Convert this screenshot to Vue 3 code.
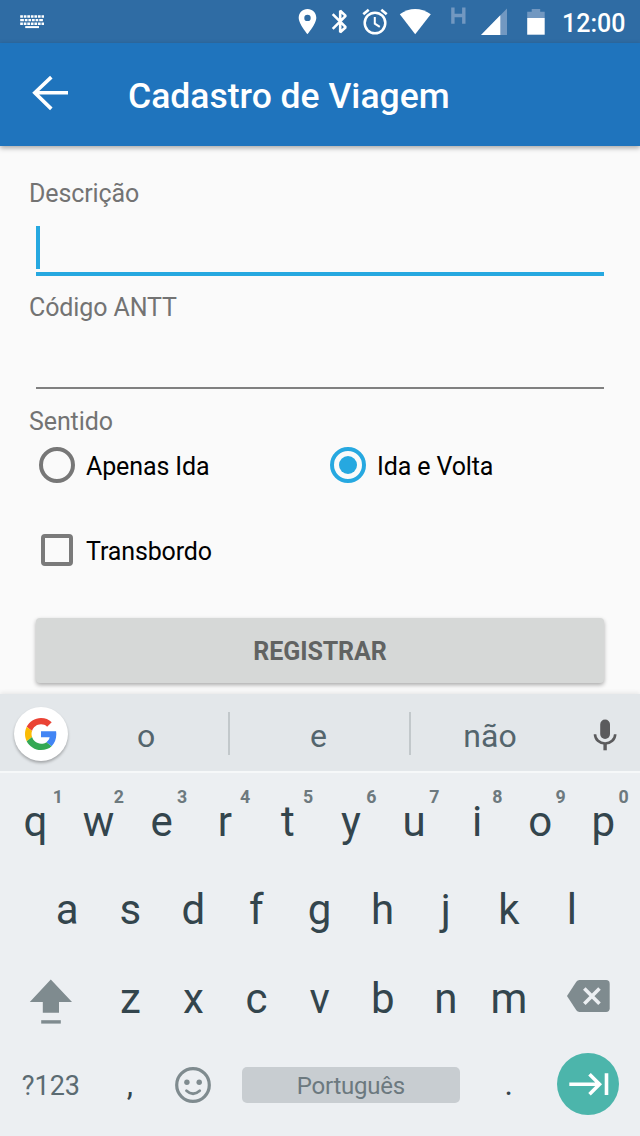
<script setup>
import { ref } from 'vue'

const direction = ref('volta')
const topRow = 'qwertyuiop'.split('').map((c, i) => ({ c, hint: (i + 1) % 10 }))
const middleRow = 'asdfghjkl'.split('')
const lowerRow = 'zxcvbnm'.split('')
const suggestions = ['o', 'e', 'não']
</script>

<template>
  <div class="screen">
    <header class="status">
      <svg class="kbd" width="26" height="17" viewBox="0 0 26 17" stroke="#fff">
        <path d="M1.200 3.400H25M1.200 10.700H25" stroke-width="2.500" stroke-dasharray="2.700 .85" />
        <path d="M1.200 7.100H25" stroke-width="2.300" stroke-dasharray="3.700 .9 2.700 .9 2.700 .9 2.700 .9 2.700 .9 3.700" />
        <path d="M6.200 14.100H20" stroke-width="2" />
      </svg>
      <svg class="tray" width="260" height="43" viewBox="290 0 260 43" fill="#fff">
        <path fill-rule="evenodd" d="M307.500 9c-5 0-8.800 3.900-8.800 8.800 0 6.300 8.800 16.400 8.800 16.400s8.800-10.100 8.800-16.400c0-4.900-3.800-8.800-8.800-8.800zm0 5.700a3.200 3.200 0 1 1 0 6.400 3.200 3.200 0 0 1 0-6.400z" />
        <path d="M332.700 14.200 345.700 27.200 340.200 32.300V10.700L345.700 15.900 332.700 28.900" fill="none" stroke="#fff" stroke-width="2.600" stroke-linejoin="bevel" />
        <g fill="none" stroke="#fff">
          <circle cx="375" cy="23" r="10.300" stroke-width="2.500" />
          <path d="M374.800 17v6.600l5 3.200" stroke-width="2" />
          <path d="M363.300 14.300l5.400-4.600M381.300 9.700l5.400 4.600" stroke-width="2.700" />
        </g>
        <path d="M399.800 14.300C404.500 10.800 410 9 415.200 9s10.800 1.800 15.600 5.300L415.200 34.200z" />
        <path d="M507 8.500V35H481z" fill="#7298c1" />
        <path d="M500.300 15.300V35H481z" />
        <path d="M527.200 18v-6.300h4.500V9h8.500v2.700h4.500V18z" fill="#7298c1" />
        <path d="M527.200 18h17.500v16.700h-17.500z" />
        <path d="M452.900 7.500v16.200M463.800 7.500v16.200M452.900 15.500h10.900" fill="none" stroke="#7298c1" stroke-width="3.400" />
      </svg>
      <span class="clock">12:00</span>
    </header>

    <div class="appbar">
      <svg width="40" height="40" viewBox="30 72 40 40" fill="none" stroke="#fff" stroke-width="3.600">
        <path d="M68 91.700H34.500M51.300 76.100 34.800 91.700 51.300 107.900" />
      </svg>
      <h1>Cadastro de Viagem</h1>
    </div>

    <main class="form">
      <label>Descrição</label>
      <div class="field active"><i class="caret"></i></div>
      <label>Código ANTT</label>
      <div class="field"></div>
      <label>Sentido</label>
      <div class="radios">
        <div class="option" @click="direction = 'ida'">
          <span class="radio" :class="{ on: direction === 'ida' }"></span>Apenas Ida
        </div>
        <div class="option" @click="direction = 'volta'">
          <span class="radio" :class="{ on: direction === 'volta' }"></span>Ida e Volta
        </div>
      </div>
      <div class="option check"><span class="box"></span>Transbordo</div>
      <button class="submit">REGISTRAR</button>
    </main>

    <section class="keyboard">
      <div class="suggest">
        <div class="google">
          <svg width="32" height="32" viewBox="0 0 48 48">
            <path fill="#ea4335" d="M24 9.500c3.540 0 6.710 1.220 9.210 3.600l6.850-6.850C35.900 2.380 30.470 0 24 0 14.620 0 6.510 5.380 2.560 13.220l7.980 6.190C12.430 13.720 17.740 9.500 24 9.500z" />
            <path fill="#4285f4" d="M46.980 24.550c0-1.570-.15-3.090-.38-4.550H24v9.020h12.940c-.58 2.960-2.260 5.480-4.780 7.180l7.730 6c4.510-4.180 7.090-10.360 7.090-17.650z" />
            <path fill="#fbbc05" d="M10.530 28.590c-.48-1.450-.76-2.990-.76-4.590s.27-3.140.76-4.590l-7.980-6.190C.92 16.460 0 20.120 0 24c0 3.880.92 7.540 2.560 10.780l7.970-6.190z" />
            <path fill="#34a853" d="M24 48c6.480 0 11.930-2.130 15.890-5.810l-7.730-6c-2.150 1.450-4.920 2.300-8.160 2.300-6.260 0-11.570-4.220-13.470-9.910l-7.980 6.190C6.510 42.620 14.620 48 24 48z" />
          </svg>
        </div>
        <div class="words">
          <span v-for="w in suggestions" :key="w">{{ w }}</span>
        </div>
        <svg class="mic" width="24" height="32" viewBox="0 0 24 32">
          <rect x="7.200" y="0.500" width="9.800" height="19.500" rx="4.900" fill="#5b5b5d" />
          <path d="M2 15.200a10.100 9.300 0 0 0 20.200 0" fill="none" stroke="#5b5b5d" stroke-width="2.600" />
          <path d="M12.100 24v7.300" stroke="#5b5b5d" stroke-width="3.400" />
        </svg>
      </div>

      <div class="keys">
        <div class="row">
          <span v-for="k in topRow" :key="k.c" class="key">{{ k.c }}<sup>{{ k.hint }}</sup></span>
        </div>
        <div class="row inset">
          <span v-for="k in middleRow" :key="k" class="key">{{ k }}</span>
        </div>
        <div class="row">
          <span class="wide">
            <svg class="shift" width="44" height="46" viewBox="29 979 44 46" fill="#7f8b8f">
              <path d="M50.800 979.500 72 1002H59v10.800H42.800V1002H29.800z" />
              <path d="M41.200 1020.200h19.600v3.400H41.200z" />
            </svg>
          </span>
          <span v-for="k in lowerRow" :key="k" class="key">{{ k }}</span>
          <span class="wide">
            <svg class="erase" width="44" height="34" viewBox="567 979 44 34">
              <path d="M579.500 980H606q3.700 0 3.700 3.700v24.500q0 3.700-3.700 3.700H579.500q-2 0-3.200-1.700L567 996l9.300-14.300q1.200-1.700 3.200-1.700z" fill="#7f8b8f" />
              <path d="M584.300 988.500l15.200 15.200M599.500 988.500l-15.200 15.200" stroke="#eceff2" stroke-width="3.600" />
            </svg>
          </span>
        </div>
        <div class="row bottom">
          <span class="wide symbols">?123</span>
          <span class="key mark">,</span>
          <span class="key smile">
            <svg width="38" height="38" viewBox="0 0 38 38" fill="none" stroke="#7f8b8f">
              <circle cx="19" cy="19" r="16.300" stroke-width="3.200" />
              <g fill="#7f8b8f" stroke="none"><circle cx="12.900" cy="16.300" r="2.700" /><circle cx="25.200" cy="16.300" r="2.700" /></g>
              <path d="M12.500 24.800q6.500 6 13.200 0" stroke-width="2.800" stroke-linecap="round" />
            </svg>
          </span>
          <span class="space"><b>Português</b></span>
          <span class="key mark">.</span>
          <span class="wide">
            <svg class="next" width="64" height="64" viewBox="0 0 64 64">
              <circle cx="32" cy="32" r="31" fill="#4cb5ab" />
              <path d="M13.300 32.200H44M33.500 22.200 43.500 32.200 33.500 42.200M50.500 21.200v21.700" fill="none" stroke="#fff" stroke-width="3.600" />
            </svg>
          </span>
        </div>
      </div>
    </section>
  </div>
</template>

<style>
body { margin: 0; }
</style>

<style scoped>
* { box-sizing: border-box; }
.screen {
  width: 640px; height: 1136px; overflow: hidden;
  display: flex; flex-direction: column;
  background: #fafafa; color: #000;
  font-family: Roboto, "Liberation Sans", sans-serif;
}
svg { display: block; flex: none; }
.status {
  height: 43px; flex: none; background: #2f6ca4;
  display: flex; align-items: center; color: #fff;
}
.kbd { margin-left: 19px; }
.tray { margin-left: auto; }
.clock { width: 90px; padding: 4px 0 0 12px; font-size: 25px; font-weight: 500; line-height: 30px; }
.appbar {
  height: 103px; flex: none; background: #1f74bd; color: #fff;
  display: flex; align-items: center; padding: 0 0 3px 30px;
  box-shadow: 0 2px 5px rgba(0, 0, 0, .34);
  z-index: 1;
}
.appbar h1 { margin: 5px 0 0 58px; font-size: 35.500px; font-weight: 500; line-height: 42px; white-space: nowrap; }
.form { height: 548px; flex: none; padding: 32px 36px 0 36px; display: flex; flex-direction: column; }
label { height: 30px; line-height: 32px; font-size: 25px; letter-spacing: -.1px; color: #737373; margin-left: -7px; }
.field { height: 67px; margin-bottom: 17px; border-bottom: 2px solid #808080; padding-top: 18px; }
.field.active { height: 68px; margin-bottom: 16px; border-bottom: 4px solid #26a8e0; }
.caret { display: block; width: 3.500px; height: 43px; background: #26a8e0; }
.radios { display: grid; grid-template-columns: 291px 1fr; margin-top: 11px; }
.option {
  display: flex; align-items: center; height: 36px; padding: 3px 0 0 3px;
  font-size: 25px; line-height: 30px; letter-spacing: -.12px;
}
.radio {
  width: 36px; height: 36px; border: 4px solid #777; border-radius: 50%;
  margin: -4px 11px 0 0; display: grid; place-items: center; flex: none;
}
.radio.on { border-color: #26a8e0; }
.radio.on::after { content: ""; width: 18px; height: 18px; border-radius: 50%; background: #26a8e0; }
.check { margin-top: 49px; padding-left: 5px; }
.box { width: 32px; height: 32px; border: 4px solid #7a7a7a; border-radius: 4px; margin: -4px 13px 0 0; flex: none; }
.submit {
  height: 65px; margin-top: 50px; padding: 2px 0 0; border: 0; border-radius: 4px;
  background: #d6d8d7; color: #616362; font: 700 25px Roboto, "Liberation Sans", sans-serif; letter-spacing: -.08px;
  box-shadow: 0 2px 4px rgba(0, 0, 0, .32);
}
.keyboard { flex: 1; background: #eceff2; display: flex; flex-direction: column; box-shadow: 0 -1px 5px rgba(0, 0, 0, .09); }
.suggest {
  height: 79px; flex: none; background: #e3e7ea; border-bottom: 2px solid #f6f8f9;
  display: flex; align-items: center; padding: 2px 23px 0 14px;
}
.google {
  width: 54px; height: 54px; border-radius: 50%; background: #fff; flex: none;
  display: grid; place-items: center; box-shadow: 0 2px 3px rgba(0, 0, 0, .28);
}
.words { flex: 1; display: flex; margin: 0 11px 0 -4px; }
.words span {
  flex: none; width: 181px; height: 43px; line-height: 48px; text-align: center;
  font-size: 32px; color: #54656d; padding-right: 2px;
}
.words span:first-child { width: 164px; padding-right: 0; }
.words span:nth-child(3) { width: 161px; padding-right: 1px; }
.words span + span { border-left: 2px solid #c2c8cb; }
.mic { margin-top: 2px; }
.keys { padding: 4px 3.500px 0 4px; color: #33454d; }
.row { display: flex; align-items: center; height: 88.500px; }
.inset { padding: 0 31.600px; }
.key {
  position: relative; width: 63.100px; height: 88px; flex: none;
  display: flex; align-items: center; justify-content: center;
  font-size: 42px; line-height: 50px; padding-top: 1px;
}
.key sup {
  position: absolute; right: 6.500px; top: 9px; font-size: 17.800px; line-height: 22px;
  font-weight: 700; color: #6d797e; letter-spacing: -.3px;
}
.key:first-child sup { right: 4.500px; }
.wide { width: 94.800px; flex: none; display: flex; justify-content: center; align-items: center; }
.shift { margin-top: 7px; }
.erase { margin: -5px 0 0 2px; }
.bottom { padding-bottom: 4px; margin-left: -.5px; }
.bottom .mark { font-size: 32px; padding: 0 0 2px; }
.bottom .smile { padding: 0; }
.symbols { font-size: 27px; color: #5b6b72; padding-top: 3px; }
.space { width: 252.800px; flex: none; display: flex; justify-content: center; }
.space b {
  width: 218px; height: 36px; border-radius: 5px; background: #c8cdd1; color: #6c797f;
  font-size: 24px; letter-spacing: -.25px; font-weight: 400; line-height: 38px; text-align: center; margin-top: 1px;
}
.next { margin-top: -1px; }
</style>
